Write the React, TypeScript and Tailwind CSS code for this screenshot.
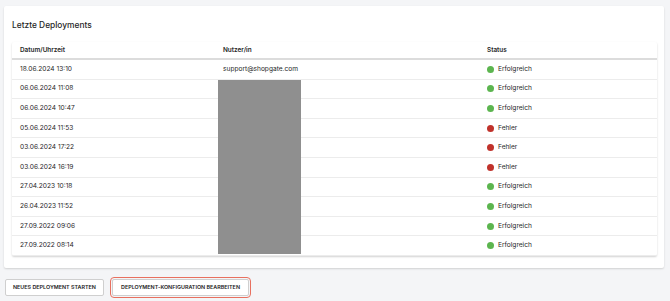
import React from "react";

const rows: [string, boolean][] = [
  ["18.06.2024 13:10", true],
  ["06.06.2024 11:08", true],
  ["06.06.2024 10:47", true],
  ["05.06.2024 11:53", false],
  ["03.06.2024 17:22", false],
  ["03.06.2024 16:19", false],
  ["27.04.2023 10:18", true],
  ["26.04.2023 11:52", true],
  ["27.09.2022 09:06", true],
  ["27.09.2022 08:14", true],
];

export default function App() {
  return (
    <div
      className="w-[670px] h-[301px] bg-[#f4f5f7] overflow-hidden pt-[6px] text-[#262626]"
      style={{ fontFamily: "Inter, 'Liberation Sans', sans-serif" }}
    >
      <div className="ml-[4px] w-[660px] h-[262px] bg-white rounded-[2px] shadow-[0_1px_2px_rgba(0,0,0,0.15)] px-[8px] pt-[14px]">
        <div className="text-[8.4px] font-medium leading-[11px] h-[22px]">Letzte Deployments</div>
        <div className="w-[645px] relative shadow-[0_1px_2px_rgba(0,0,0,0.18)] rounded-[2px]">
          <div className="flex h-[18px] items-center text-[6.4px] leading-[9px] font-semibold border-b-[2px] border-[#dcdcdc]">
            <div className="w-[203px] pl-[8px]">Datum/Uhrzeit</div>
            <div className="w-[264px] pl-[8px]">Nutzer/in</div>
            <div className="flex-1 pl-[8px]">Status</div>
          </div>
          {rows.map(([d, ok], i) => (
            <div
              key={i}
              className="flex h-[19.6px] items-center text-[6.6px] leading-[9px] border-b border-[#ececec]"
            >
              <div className="w-[203px] pl-[8px]">{d}</div>
              <div className="w-[264px] pl-[8px]">{i === 0 ? "support@shopgate.com" : ""}</div>
              <div className="flex-1 pl-[8px] flex items-center gap-[4px]">
                <span
                  className={
                    "block w-[7px] h-[7px] rounded-full " +
                    (ok ? "bg-[#5cb54f]" : "bg-[#c0322b]")
                  }
                />
                <span className="block">{ok ? "Erfolgreich" : "Fehler"}</span>
              </div>
            </div>
          ))}
          <div className="absolute left-[206px] top-[38px] w-[83px] h-[174px] bg-[#8f8f8f]" />
        </div>
      </div>
      <div className="flex items-start mt-[11px] ml-[5px] gap-[8px]">
        <button className="h-[17px] px-[7px] bg-white border border-[#cfcfcf] rounded-[2px] text-[5.4px] leading-none font-semibold whitespace-nowrap text-[#222] w-[99px]">
          NEUES DEPLOYMENT STARTEN
        </button>
        <button className="h-[17px] bg-white border border-[#cfcfcf] rounded-[2px] text-[5.4px] leading-none font-semibold whitespace-nowrap text-[#222] w-[137px] outline-[1.5px] outline-solid outline-[#e8705f] outline-offset-[1.5px]">
          DEPLOYMENT-KONFIGURATION BEARBEITEN
        </button>
      </div>
    </div>
  );
}
